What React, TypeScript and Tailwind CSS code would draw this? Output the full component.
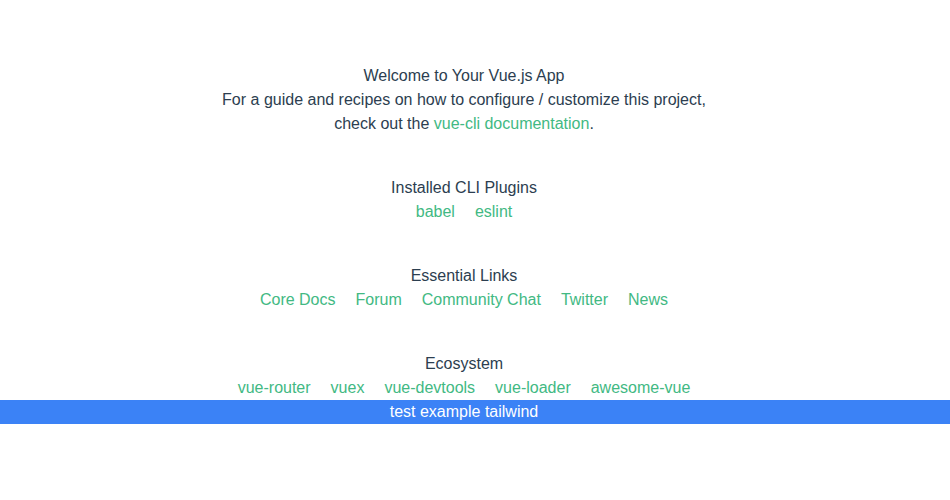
const sections = [
  { title: "Installed CLI Plugins", links: ["babel", "eslint"] },
  { title: "Essential Links", links: ["Core Docs", "Forum", "Community Chat", "Twitter", "News"] },
  { title: "Ecosystem", links: ["vue-router", "vuex", "vue-devtools", "vue-loader", "awesome-vue"] },
];

export default function App() {
  return (
    <div
      className="pt-16 text-center text-[16px] leading-6 text-[#2c3e50] bg-white min-h-[500px]"
      style={{ fontFamily: '"Liberation Sans", Arial, sans-serif' }}
    >
      <div className="pr-[22px]">
        <h1>Welcome to Your Vue.js App</h1>
        <p>
          For a guide and recipes on how to configure / customize this project,
          <br />
          check out the <a href="#" className="text-[#42b983]">vue-cli documentation</a>.
        </p>
        {sections.map((s) => (
          <div key={s.title}>
            <h3 className="mt-10">{s.title}</h3>
            <ul>
              {s.links.map((l) => (
                <li key={l} className="inline-block mx-[10px]">
                  <a href="#" className="text-[#42b983]">{l}</a>
                </li>
              ))}
            </ul>
          </div>
        ))}
      </div>
      <div className="bg-[#3b82f6] text-white pr-[22px]">test example tailwind</div>
    </div>
  );
}
